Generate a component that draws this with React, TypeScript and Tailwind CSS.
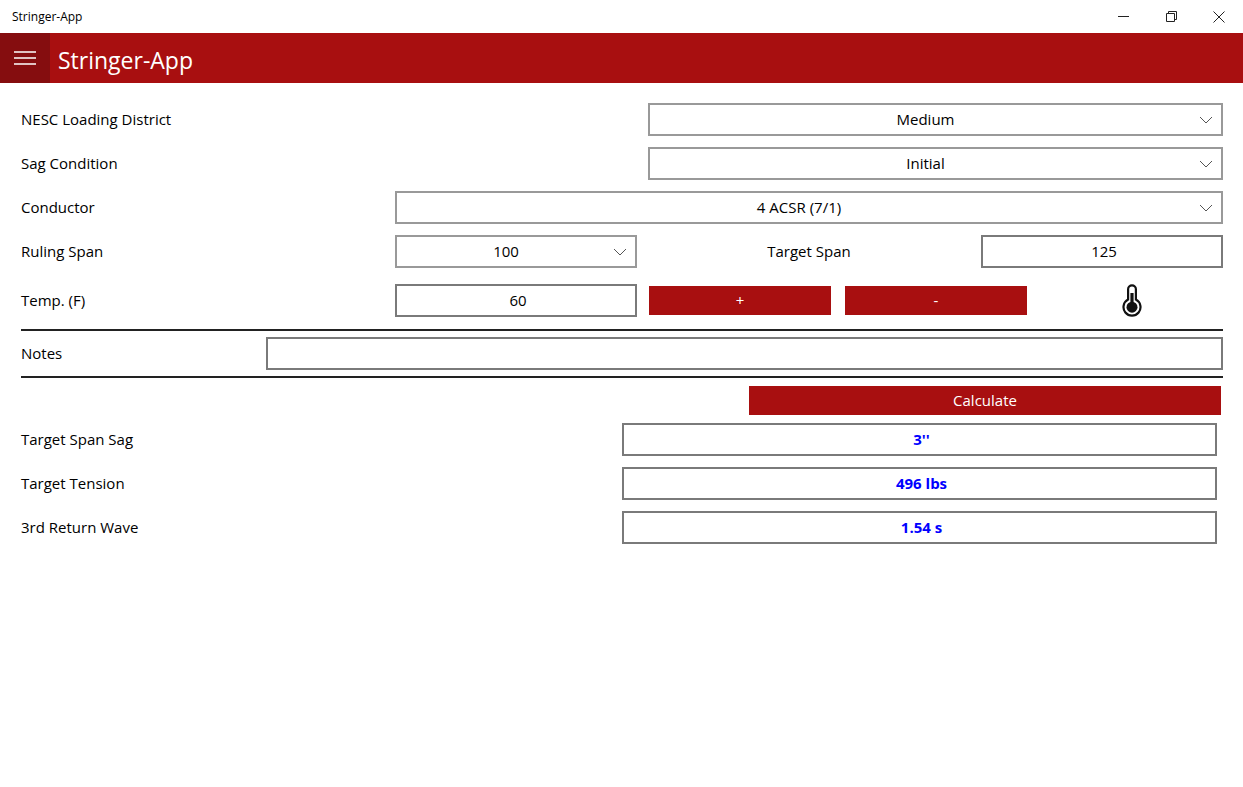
import { useState } from 'react';
import type { ReactNode, SelectHTMLAttributes, InputHTMLAttributes } from 'react';

const districts = ['Heavy', 'Medium', 'Light'];
const sagConditions = ['Initial', 'Final'];
const conductors = ['4 ACSR (7/1)', '2 ACSR (6/1)', '1/0 ACSR (6/1)', '4/0 ACSR (6/1)'];
const rulingSpans = ['100', '150', '200', '250', '300'];

function Label({ htmlFor, children }: { htmlFor: string; children: ReactNode }) {
  return (
    <label htmlFor={htmlFor} className="whitespace-nowrap">
      {children}
    </label>
  );
}

function Select({ options, ...props }: { options: string[] } & SelectHTMLAttributes<HTMLSelectElement>) {
  return (
    <div className="relative">
      <select
        {...props}
        className="block h-[33px] w-full appearance-none rounded-none border-2 border-[#999999] bg-white pr-5 text-center focus:outline-none focus:border-[#a80f10]"
      >
        {options.map((option) => (
          <option key={option}>{option}</option>
        ))}
      </select>
      <svg
        className="pointer-events-none absolute right-2.5 top-1/2 h-2 w-3.5 -translate-y-1/2"
        viewBox="0 0 14 8"
        fill="none"
        stroke="#555555"
        aria-hidden="true"
      >
        <path d="M1 1l6 6 6-6" />
      </svg>
    </div>
  );
}

function TextBox({ result, ...props }: { result?: boolean } & InputHTMLAttributes<HTMLInputElement>) {
  return (
    <input
      type="text"
      {...props}
      readOnly={result}
      className={`block h-[33px] w-full min-w-0 rounded-none border-2 border-[#7a7a7a] bg-white pb-0.5 pl-1 text-center focus:outline-none ${
        result ? 'font-bold text-[#0000ff]' : 'focus:border-[#a80f10]'
      }`}
    />
  );
}

function TitleBar() {
  return (
    <div className="flex h-[33px] items-center justify-between pl-3">
      <span className="text-xs">Stringer-App</span>
      <div className="flex h-full text-[#222222]">
        <button aria-label="Minimize" className="flex w-12 items-center justify-center">
          <svg width="11" height="11" viewBox="0 0 11 11" fill="none" stroke="currentColor">
            <path d="M0 5.5h11" />
          </svg>
        </button>
        <button aria-label="Restore" className="flex w-12 items-center justify-center">
          <svg width="11" height="11" viewBox="0 0 11 11" fill="none" stroke="currentColor">
            <path d="M.5 2.5h8v8h-8zM2.5 2.5v-2h8v8h-2" />
          </svg>
        </button>
        <button aria-label="Close" className="flex w-12 items-center justify-center">
          <svg width="12" height="12" viewBox="0 0 12 12" fill="none" stroke="currentColor">
            <path d="M.5.5l11 11M11.5.5l-11 11" />
          </svg>
        </button>
      </div>
    </div>
  );
}

function Thermometer() {
  return (
    <svg width="20" height="33" viewBox="0 0 20 33" fill="none" aria-hidden="true">
      <path
        d="M6.1 15.6V5.2a3.9 3.9 0 0 1 7.8 0v10.4a8.5 8.5 0 1 1-7.8 0z"
        stroke="#111111"
        strokeWidth="2.2"
      />
      <path d="M10 9v14" stroke="#111111" strokeWidth="3.2" />
      <circle cx="10" cy="23.2" r="5.5" fill="#111111" />
    </svg>
  );
}

export default function App() {
  const [temp, setTemp] = useState(60);
  const [span, setSpan] = useState('125');
  const [notes, setNotes] = useState('');

  return (
    <div className="min-h-screen bg-white text-[15px] text-black font-['Open_Sans','Noto_Sans',sans-serif]">
      <TitleBar />

      <header className="flex h-[50px] items-center bg-[#a80f10] text-white">
        <button aria-label="Menu" className="flex size-[50px] items-center justify-center bg-[#850d0f]">
          <svg width="22" height="14" viewBox="0 0 22 14" fill="none" stroke="currentColor" strokeWidth="1.6">
            <path d="M0 1h22M0 7h22M0 13h22" />
          </svg>
        </button>
        <h1 className="pl-2 pt-1 text-[23px]">Stringer-App</h1>
      </header>

      <main className="pl-[21px] pr-5 pt-5">
        {/* Inputs */}
        <div className="flex flex-col gap-[11px]">
          <div className="grid grid-cols-[627fr_575fr] items-center">
            <Label htmlFor="district">NESC Loading District</Label>
            <Select id="district" options={districts} defaultValue="Medium" />
          </div>
          <div className="grid grid-cols-[627fr_575fr] items-center">
            <Label htmlFor="sag">Sag Condition</Label>
            <Select id="sag" options={sagConditions} defaultValue="Initial" />
          </div>
          <div className="grid grid-cols-[374fr_828fr] items-center">
            <Label htmlFor="conductor">Conductor</Label>
            <Select id="conductor" options={conductors} />
          </div>
          <div className="grid grid-cols-[374fr_242fr_344fr_242fr] items-center">
            <Label htmlFor="ruling">Ruling Span</Label>
            <Select id="ruling" options={rulingSpans} />
            <div className="text-center">
              <Label htmlFor="target">Target Span</Label>
            </div>
            <TextBox id="target" value={span} onChange={(e) => setSpan(e.target.value)} />
          </div>
        </div>

        <div className="mt-4 grid grid-cols-[374fr_242fr_586fr] items-center">
          <Label htmlFor="temp">Temp. (F)</Label>
          <TextBox id="temp" value={temp} onChange={(e) => setTemp(Number(e.target.value) || 0)} />
          <div className="grid grid-cols-3 items-center gap-3.5 pl-3">
            <button onClick={() => setTemp(temp + 1)} className="h-[29px] bg-[#a80f10] text-white">
              +
            </button>
            <button onClick={() => setTemp(temp - 1)} className="h-[29px] bg-[#a80f10] text-white">
              -
            </button>
            <div className="flex justify-center">
              <Thermometer />
            </div>
          </div>
        </div>

        {/* Notes */}
        <div className="mt-3 grid grid-cols-[245fr_957fr] items-center border-y-2 border-[#222222] py-1.5">
          <Label htmlFor="notes">Notes</Label>
          <TextBox id="notes" value={notes} onChange={(e) => setNotes(e.target.value)} />
        </div>

        {/* Results */}
        <div className="mt-2 grid grid-cols-[728fr_474fr]">
          <button className="col-start-2 mr-0.5 h-[29px] bg-[#a80f10] text-white">Calculate</button>
        </div>
        <div className="mt-2 flex flex-col gap-[11px] pr-1.5">
          <div className="grid grid-cols-[601fr_595fr] items-center">
            <Label htmlFor="targetSag">Target Span Sag</Label>
            <TextBox id="targetSag" result value="3''" />
          </div>
          <div className="grid grid-cols-[601fr_595fr] items-center">
            <Label htmlFor="tension">Target Tension</Label>
            <TextBox id="tension" result value="496 lbs" />
          </div>
          <div className="grid grid-cols-[601fr_595fr] items-center">
            <Label htmlFor="wave">3rd Return Wave</Label>
            <TextBox id="wave" result value="1.54 s" />
          </div>
        </div>
      </main>
    </div>
  );
}
